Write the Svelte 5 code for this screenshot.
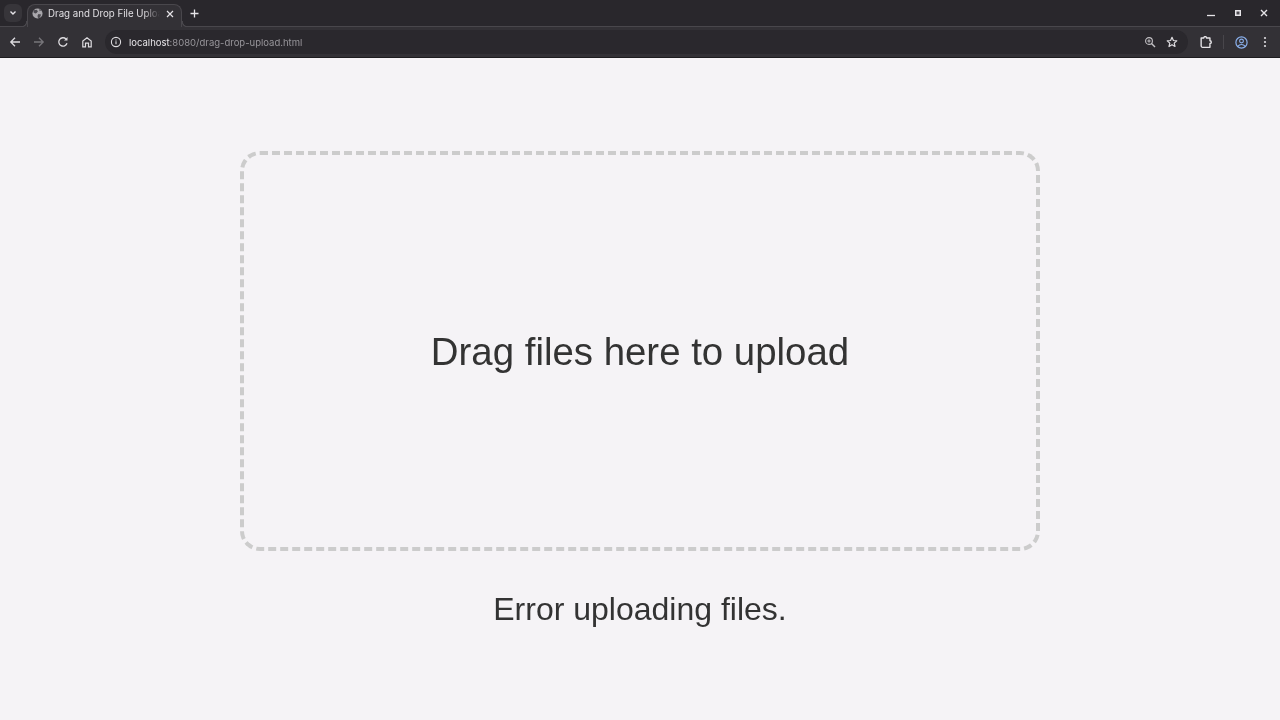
<script lang="ts">
  const title = 'Drag and Drop File Upload';
  let message = $state('Error uploading files.');
</script>

<div class="window">
  <header class="tabstrip">
    <button class="tab-search" aria-label="Search tabs">
      <svg width="10" height="10" viewBox="0 0 10 10"><path d="M2.500 3.500 5 6 7.500 3.500" fill="none" stroke="#e6e4e8" stroke-width="1.400"/></svg>
    </button>
    <div class="tab">
      <svg class="globe" width="11" height="11" viewBox="0 0 12 12">
        <circle cx="6" cy="6" r="5.500" fill="#a9a7ac"/>
        <path d="M2 2.500 5 2l1.500 1.500L5 5.500 3.500 6 1.500 4.500zM7 6.500l3 .5-1.500 3.500L6.500 11 6 8.500z" fill="#4c4a50"/>
        <path d="M7.500 1 10 2.500 8.500 3.500z" fill="#4c4a50"/>
      </svg>
      <span class="tab-title">{title}</span>
      <svg class="tab-close" width="8" height="8" viewBox="0 0 8 8"><path d="M1 1 7 7M7 1 1 7" stroke="#e6e4e8" stroke-width="1.200"/></svg>
    </div>
    <svg class="new-tab" width="9" height="9" viewBox="0 0 9 9"><path d="M4.500 .5v8M.5 4.500h8" stroke="#e6e4e8" stroke-width="1.300"/></svg>
    <div class="window-controls">
      <svg class="min" width="8" height="8" viewBox="0 0 8 8"><path d="M0 6.500h8" stroke="#e6e4e8" stroke-width="1.300"/></svg>
      <svg width="6" height="6" viewBox="0 0 6 6"><rect x=".75" y=".75" width="4.500" height="4.500" fill="#4a484e" stroke="#e6e4e8" stroke-width="1.500"/></svg>
      <svg width="8" height="8" viewBox="0 0 8 8"><path d="M1 1 7 7M7 1 1 7" stroke="#e6e4e8" stroke-width="1.400"/></svg>
    </div>
  </header>

  <nav class="toolbar">
    <svg class="nav" width="12" height="12" viewBox="0 0 12 12"><path d="M11 6H2M6 1.800 1.800 6 6 10.200" fill="none" stroke="#dedce0" stroke-width="1.300"/></svg>
    <svg class="nav" width="12" height="12" viewBox="0 0 12 12"><path d="M1 6h9M6 1.800 10.200 6 6 10.200" fill="none" stroke="#77757a" stroke-width="1.300"/></svg>
    <svg class="nav" width="12" height="12" viewBox="0 0 12 12"><path d="M10 7.200A4.200 4.200 0 1 1 9 3" fill="none" stroke="#dedce0" stroke-width="1.300"/><path d="M10.500 1v3.500H7z" fill="#dedce0"/></svg>
    <svg class="nav" width="12" height="12" viewBox="0 0 12 12"><path d="M1.800 10.800V5L6 1.700 10.200 5v5.800H7.500V7.200h-3v3.600z" fill="none" stroke="#dedce0" stroke-width="1.200"/></svg>
    <div class="omnibox">
      <svg class="info" width="12" height="12" viewBox="0 0 12 12"><circle cx="6" cy="6" r="4.600" fill="none" stroke="#dedce0" stroke-width="1.100"/><path d="M6 5.300v3M6 3.500v1" stroke="#dedce0" stroke-width="1.100"/></svg>
      <span class="url"><span class="host">localhost</span>:8080/drag-drop-upload.html</span>
      <svg class="zoom" width="12" height="12" viewBox="0 0 12 12"><circle cx="5" cy="5" r="3.400" fill="none" stroke="#c4c2c6" stroke-width="1.100"/><path d="M7.500 7.500 11 11" stroke="#c4c2c6" stroke-width="1.400"/><path d="M3.300 5h3.400M5 3.300v3.400" stroke="#c4c2c6"/></svg>
      <svg class="star" width="12" height="12" viewBox="0 0 12 12"><path d="M6 1.300 7.400 4.500l3.400.3-2.600 2.300.8 3.400L6 8.700l-3 1.800.8-3.400L1.200 4.800l3.400-.3z" fill="none" stroke="#dedce0" stroke-width="1.200" stroke-linejoin="round"/></svg>
    </div>
    <svg class="ext" width="12" height="12" viewBox="1 0.500 10.500 10.500"><path d="M2 2.200h2.300a1.200 1.200 0 0 1 2.400 0h3v2.500a1.200 1.200 0 0 1 0 2.400v3.300H3.300a1.300 1.300 0 0 1-1.300-1.300z" fill="none" stroke="#e6e4e8" stroke-width="1.200" stroke-linejoin="round"/></svg>
    <span class="divider"></span>
    <svg class="avatar" width="13" height="13" viewBox="0 0 13 13"><circle cx="6.500" cy="6.500" r="5.600" fill="none" stroke="#8ab0ec" stroke-width="1.200"/><circle cx="6.500" cy="5" r="1.900" fill="none" stroke="#8ab0ec" stroke-width="1.100"/><path d="M2.800 10.300c1.800-2.400 5.600-2.400 7.400 0" fill="none" stroke="#8ab0ec" stroke-width="1.100"/></svg>
    <svg class="menu" width="4" height="12" viewBox="0 0 4 12"><circle cx="2" cy="2" r="1.100" fill="#dedce0"/><circle cx="2" cy="6" r="1.100" fill="#dedce0"/><circle cx="2" cy="10" r="1.100" fill="#dedce0"/></svg>
  </nav>

  <main class="page">
    <div class="dropzone"><span class="label">Drag files here to upload</span></div>
    <div class="status">{message}</div>
  </main>
</div>

<style>
  :global(body) {
    margin: 0;
    background: #f5f3f6;
  }
  .window {
    height: 720px;
    display: flex;
    flex-direction: column;
    overflow: hidden;
  }
  .tabstrip {
    height: 26px;
    flex: none;
    background: #29272c;
    display: flex;
    align-items: flex-end;
    position: relative;
    z-index: 1;
    font-family: Inter, Roboto, "Liberation Sans", sans-serif;
  }
  .tab-search {
    width: 18px;
    height: 18px;
    margin: 0 5px 4px 4px;
    padding: 0;
    border: 0;
    border-radius: 6px;
    background: #37353a;
    display: flex;
    align-items: center;
    justify-content: center;
  }
  .tab {
    width: 155px;
    height: 23px;
    margin-bottom: -1px;
    box-sizing: border-box;
    padding: 0 7px 5px 4px;
    background: #333136;
    border: 1px solid #49474c;
    border-bottom: 0;
    border-radius: 8px 8px 0 0;
    display: flex;
    align-items: center;
    position: relative;
  }
  .tab::before,
  .tab::after {
    content: "";
    position: absolute;
    bottom: 0;
    width: 6px;
    height: 6px;
  }
  .tab::before {
    left: -7px;
    background: radial-gradient(circle at 0 0, transparent 5px, #49474c 5.500px, #49474c 6.200px, #333136 6.700px);
  }
  .tab::after {
    right: -7px;
    background: radial-gradient(circle at 100% 0, transparent 5px, #49474c 5.500px, #49474c 6.200px, #333136 6.700px);
  }
  .globe {
    flex: none;
    margin-right: 5px;
  }
  .tab-title {
    flex: 1;
    min-width: 0;
    white-space: nowrap;
    overflow: hidden;
    font-size: 9.700px;
    color: #e0dee2;
    -webkit-mask-image: linear-gradient(to right, #000 85%, transparent 100%);
    mask-image: linear-gradient(to right, #000 85%, transparent 100%);
  }
  .tab-close {
    flex: none;
    margin-left: 6px;
  }
  .new-tab {
    margin: 0 0 8px 8px;
  }
  .window-controls {
    margin-left: auto;
    display: flex;
    align-items: center;
    gap: 19px;
    height: 26px;
    padding-right: 12px;
  }
  .min {
    margin-right: 1px;
    margin-left: -1px;
  }
  .toolbar {
    height: 32px;
    flex: none;
    box-sizing: border-box;
    background: #333136;
    border-top: 1px solid #49474c;
    border-bottom: 1px solid #1d1c1f;
    display: flex;
    align-items: center;
    padding: 0 11px 0 9px;
    font-family: Inter, Roboto, "Liberation Sans", sans-serif;
  }
  .nav {
    flex: none;
    margin-right: 12px;
  }
  .omnibox {
    width: 1083px;
    flex: none;
    height: 24px;
    box-sizing: border-box;
    border-radius: 12px;
    background: #2a282d;
    display: flex;
    align-items: center;
    padding: 0 10px 0 5px;
  }
  .info {
    flex: none;
    margin-right: 7px;
  }
  .url {
    font-size: 9.500px;
    color: #98969b;
    white-space: nowrap;
    will-change: opacity;
  }
  .host {
    color: #e6e4e8;
  }
  .zoom {
    margin-left: auto;
    margin-right: 10px;
  }
  .ext {
    flex: none;
    margin-left: 12px;
  }
  .divider {
    width: 1px;
    height: 14px;
    background: #48464b;
    margin: 0 11px;
  }
  .menu {
    flex: none;
    margin-left: 15px;
  }
  .page {
    flex: 1;
    display: flex;
    flex-direction: column;
    align-items: center;
    justify-content: center;
    font-family: "Liberation Sans", Arial, sans-serif;
  }
  .dropzone {
    width: 800px;
    height: 400px;
    box-sizing: border-box;
    border: 4px dashed #ccc;
    border-radius: 20px;
    padding-top: 2px;
    display: flex;
    align-items: center;
    justify-content: center;
    font-size: 38.4px;
    color: #333;
  }
  .label,
  .status {
    will-change: opacity;
  }
  .status {
    margin-top: 40px;
    font-size: 32px;
    color: #333;
  }
</style>
